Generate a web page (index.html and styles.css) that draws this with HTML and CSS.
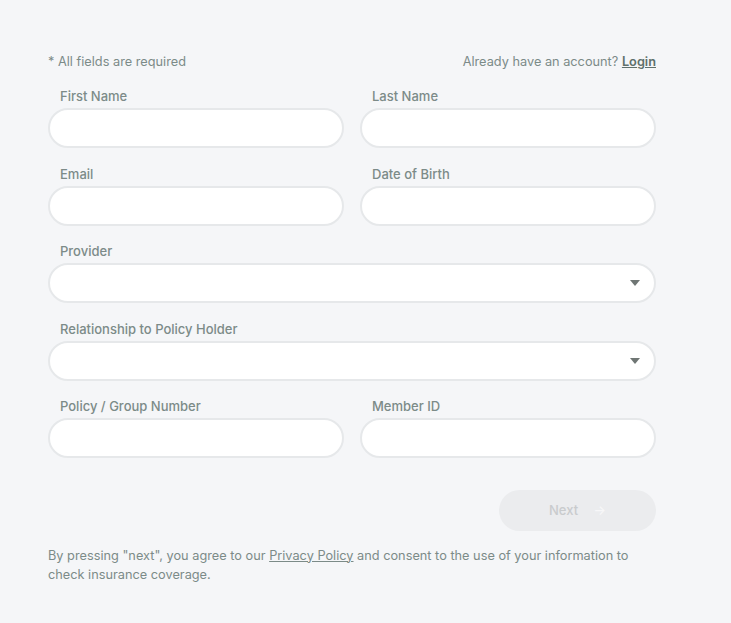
FILE: index.html
```html
<!DOCTYPE html>
<html lang="en">

<head>
    <meta charset="UTF-8">
    <title>Check Coverage</title>
    <link rel="stylesheet" href="styles.css">
</head>

<body>
    <div class="signup">
        <div class="form-top">
            <span>* All fields are required</span>
            <span>Already have an account? <a href="#" class="login-link">Login</a></span>
        </div>
        <form>
            <div class="row">
                <div class="form-group">
                    <label for="first">First Name</label>
                    <input type="text" id="first">
                </div>
                <div class="form-group">
                    <label for="last">Last Name</label>
                    <input type="text" id="last">
                </div>
            </div>
            <div class="row">
                <div class="form-group">
                    <label for="email">Email</label>
                    <input type="email" id="email">
                </div>
                <div class="form-group">
                    <label for="dob">Date of Birth</label>
                    <input type="text" id="dob">
                </div>
            </div>
            <div class="form-group">
                <label for="provider">Provider</label>
                <div class="select-wrap">
                    <select id="provider"></select>
                    <svg class="chevron" width="10" height="6" viewBox="0 0 10 6"><path d="M0 0h10L5 6z" fill="#6f7674"/></svg>
                </div>
            </div>
            <div class="form-group">
                <label for="relationship">Relationship to Policy Holder</label>
                <div class="select-wrap">
                    <select id="relationship"></select>
                    <svg class="chevron" width="10" height="6" viewBox="0 0 10 6"><path d="M0 0h10L5 6z" fill="#6f7674"/></svg>
                </div>
            </div>
            <div class="row">
                <div class="form-group">
                    <label for="policy">Policy / Group Number</label>
                    <input type="text" id="policy">
                </div>
                <div class="form-group">
                    <label for="member">Member ID</label>
                    <input type="text" id="member">
                </div>
            </div>
            <div class="actions">
                <button class="btn" type="submit" disabled>Next <span class="arrow">&rarr;</span></button>
            </div>
        </form>
        <p class="consent">
            By pressing "next", you agree to our <a href="#">Privacy Policy</a> and consent to the use of your information to
            check insurance coverage.
        </p>
    </div>
</body>

</html>
```

FILE: styles.css
```css
body {
    margin: 0;
    font-family: 'Inter', 'Noto Sans', sans-serif;
    background: #f5f6f8;
    color: #7c8b88;
}

.signup {
    width: 608px;
    margin: 0 48px;
    padding-top: 54px;
}

.form-top {
    display: flex;
    justify-content: space-between;
    font-size: 12.75px;
    line-height: 16px;
    margin-bottom: 18px;
}

.login-link {
    color: #5f706c;
    font-weight: 600;
    text-decoration: underline;
}

.row {
    display: grid;
    grid-template-columns: 1fr 1fr;
    gap: 16px;
}

.form-group {
    margin-bottom: 17.5px;
}

label {
    display: block;
    padding-left: 12px;
    margin-bottom: 4px;
    font-size: 13px;
    line-height: 16px;
    font-weight: 500;
}

input,
select {
    display: block;
    width: 100%;
    height: 40px;
    box-sizing: border-box;
    border: 2px solid #e6e8ea;
    border-radius: 20px;
    background: #fff;
    padding: 0 16px;
    font-family: inherit;
    font-size: 14px;
    appearance: none;
    outline: none;
}

.select-wrap {
    position: relative;
}

.chevron {
    position: absolute;
    right: 16px;
    top: 17px;
}

.actions {
    display: flex;
    justify-content: flex-end;
    margin-top: 14px;
}

.btn {
    width: 157px;
    height: 41px;
    border: none;
    border-radius: 21px;
    background: #ebecee;
    color: #c9cbcd;
    font-family: inherit;
    font-size: 13px;
    font-weight: 500;
}

.arrow {
    margin-left: 12px;
    color: #f7f7f8;
}

.consent {
    margin: 15px 0 0;
    font-size: 12.75px;
    line-height: 19px;
}

.consent a {
    color: inherit;
    text-decoration: underline;
}
```
